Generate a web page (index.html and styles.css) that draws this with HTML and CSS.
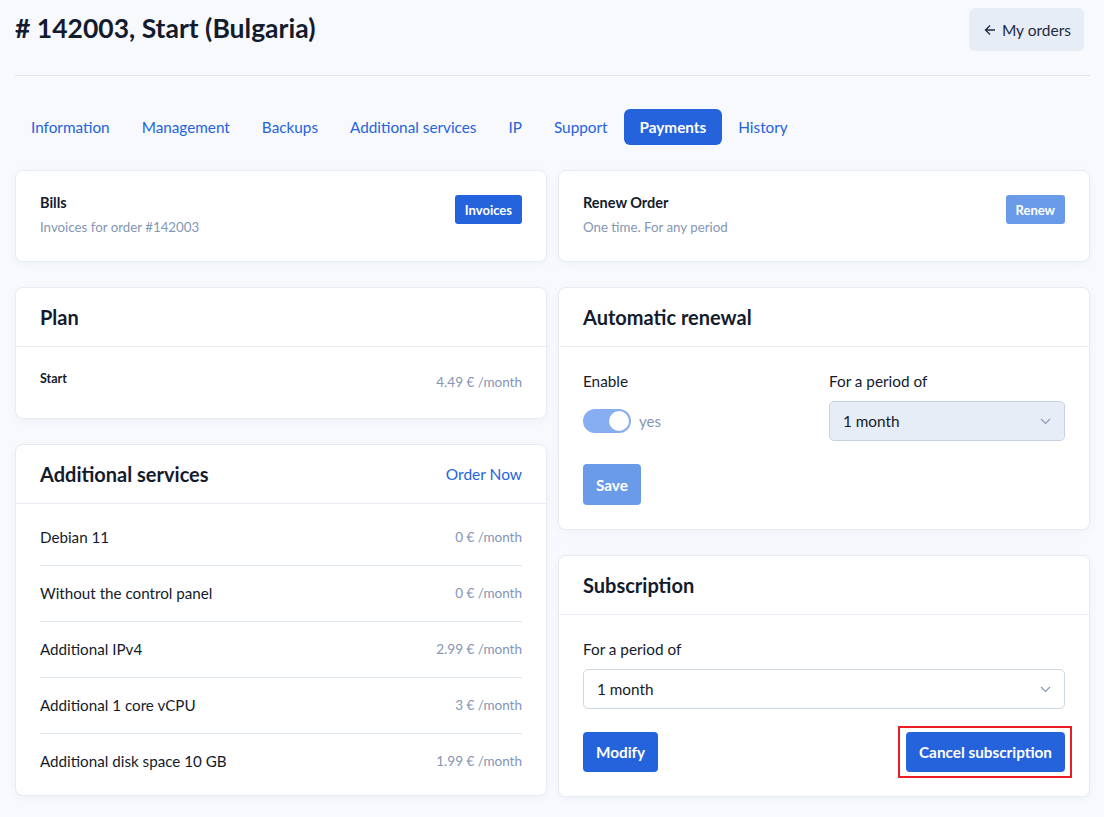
FILE: index.html
```html
<!DOCTYPE html>
<html>
<head>
    <title>Order #142003</title>
    <link rel="stylesheet" href="styles.css">
</head>
<body>
    <div class="page">
        <div class="page-header">
            <h1># 142003, Start (Bulgaria)</h1>
            <a class="back-btn" href="#">
                <svg width="12" height="12" viewBox="0 0 12 12"><path d="M11 6H1.5M6 1.5L1.5 6L6 10.5" fill="none" stroke="currentColor" stroke-width="1.3"/></svg>
                My orders
            </a>
        </div>

        <nav class="tabs">
            <a href="#">Information</a>
            <a href="#">Management</a>
            <a href="#">Backups</a>
            <a href="#">Additional services</a>
            <a href="#">IP</a>
            <a href="#">Support</a>
            <a href="#" class="active">Payments</a>
            <a href="#">History</a>
        </nav>

        <div class="columns">
            <div class="column">
                <div class="card card-inline">
                    <div>
                        <div class="inline-title">Bills</div>
                        <div class="inline-sub">Invoices for order #142003</div>
                    </div>
                    <button class="btn btn-sm">Invoices</button>
                </div>

                <div class="card">
                    <div class="card-header">
                        <h2>Plan</h2>
                    </div>
                    <div class="plan-body">
                        <span class="plan-name">Start</span>
                        <span class="price">4.49 € /month</span>
                    </div>
                </div>

                <div class="card">
                    <div class="card-header">
                        <h2>Additional services</h2>
                        <a href="#" class="header-link">Order Now</a>
                    </div>
                    <div class="service-list">
                        <div class="service-row"><span>Debian 11</span><span class="price">0 € /month</span></div>
                        <div class="service-row"><span>Without the control panel</span><span class="price">0 € /month</span></div>
                        <div class="service-row"><span>Additional IPv4</span><span class="price">2.99 € /month</span></div>
                        <div class="service-row"><span>Additional 1 core vCPU</span><span class="price">3 € /month</span></div>
                        <div class="service-row"><span>Additional disk space 10 GB</span><span class="price">1.99 € /month</span></div>
                    </div>
                </div>
            </div>

            <div class="column">
                <div class="card card-inline">
                    <div>
                        <div class="inline-title">Renew Order</div>
                        <div class="inline-sub">One time. For any period</div>
                    </div>
                    <button class="btn btn-sm btn-light">Renew</button>
                </div>

                <div class="card">
                    <div class="card-header">
                        <h2>Automatic renewal</h2>
                    </div>
                    <div class="card-body">
                        <div class="form-grid">
                            <div>
                                <label class="field-label">Enable</label>
                                <div class="toggle-wrap">
                                    <span class="toggle"><span class="knob"></span></span>
                                    <span class="toggle-text">yes</span>
                                </div>
                            </div>
                            <div>
                                <label class="field-label">For a period of</label>
                                <div class="select select-disabled">
                                    <span>1 month</span>
                                    <svg width="11" height="7" viewBox="0 0 11 7"><path d="M1 1l4.5 4.5L10 1" fill="none" stroke="#8a9ab5" stroke-width="1.2"/></svg>
                                </div>
                            </div>
                        </div>
                        <button class="btn btn-light btn-save">Save</button>
                    </div>
                </div>

                <div class="card">
                    <div class="card-header">
                        <h2>Subscription</h2>
                    </div>
                    <div class="card-body">
                        <label class="field-label">For a period of</label>
                        <div class="select">
                            <span>1 month</span>
                            <svg width="11" height="7" viewBox="0 0 11 7"><path d="M1 1l4.5 4.5L10 1" fill="none" stroke="#8a9ab5" stroke-width="1.2"/></svg>
                        </div>
                        <div class="sub-actions">
                            <button class="btn">Modify</button>
                            <span class="marked"><button class="btn">Cancel subscription</button></span>
                        </div>
                    </div>
                </div>
            </div>
        </div>
    </div>
</body>
</html>
```

FILE: styles.css
```css
body {
    margin: 0;
    background: #f7f9fd;
    font-family: Lato, "Open Sans", sans-serif;
    color: #141b2d;
}

.page {
    padding: 8px 14px 20px 15px;
}

.page-header {
    display: flex;
    justify-content: space-between;
    align-items: flex-start;
    padding-bottom: 24px;
    border-bottom: 1px solid #dfe5ee;
}

h1 {
    margin: 0;
    padding-top: 3px;
    font-size: 26.5px;
    font-weight: 700;
    line-height: 34px;
}

.back-btn {
    display: flex;
    align-items: center;
    gap: 6px;
    height: 43px;
    padding: 0 13px 0 15px;
    margin-right: 6px;
    background: #e6edf7;
    border-radius: 6px;
    color: #1e2a40;
    font-size: 15.5px;
    text-decoration: none;
}

.tabs {
    display: flex;
    margin-top: 33px;
}

.tabs a {
    padding: 0 16px;
    height: 36px;
    line-height: 36px;
    border-radius: 6px;
    color: #2563dc;
    font-size: 15.3px;
    text-decoration: none;
}

.tabs a.active {
    background: #2563dc;
    color: #fff;
    font-weight: 700;
}

.columns {
    display: grid;
    grid-template-columns: 1fr 1fr;
    gap: 11px;
    margin-top: 25px;
}

.column {
    display: flex;
    flex-direction: column;
    gap: 25px;
}

.card {
    background: #fff;
    border: 1px solid #e7ecf4;
    border-radius: 8px;
    box-shadow: 0 2px 8px rgba(30, 50, 90, 0.04);
}

.card-inline {
    display: flex;
    justify-content: space-between;
    align-items: flex-start;
    padding: 22px 24px 24px;
}

.inline-title {
    font-size: 14.5px;
    font-weight: 700;
    line-height: 20px;
}

.inline-sub {
    margin-top: 4px;
    font-size: 13.3px;
    line-height: 20px;
    color: #8496b5;
}

.card-header {
    display: flex;
    justify-content: space-between;
    align-items: center;
    height: 58px;
    padding: 0 24px;
    border-bottom: 1px solid #e7ecf4;
}

h2 {
    margin: 0;
    font-size: 20px;
    font-weight: 700;
}

.header-link {
    color: #2563dc;
    font-size: 15.5px;
    text-decoration: none;
}

.price {
    font-size: 13.5px;
    color: #8496b5;
}

.plan-body {
    display: flex;
    justify-content: space-between;
    align-items: flex-start;
    padding: 24px 24px 26px;
    height: 21px;
}

.plan-name {
    font-size: 12.5px;
    font-weight: 700;
}

.plan-body .price {
    padding-top: 3px;
}

.service-list {
    padding: 6px 24px;
}

.service-row {
    display: flex;
    justify-content: space-between;
    align-items: center;
    padding: 17px 0;
    line-height: 21px;
    font-size: 15.2px;
    border-bottom: 1px solid #dee6f1;
}

.service-row:last-child {
    border-bottom: none;
}

.card-body {
    padding: 24px 24px 24px;
}

.form-grid {
    display: grid;
    grid-template-columns: 1fr 1fr;
    gap: 10px;
}

.field-label {
    display: block;
    margin-bottom: 10px;
    font-size: 15.3px;
    line-height: 20px;
}

.toggle-wrap {
    display: flex;
    align-items: center;
    gap: 8px;
    height: 40px;
}

.toggle {
    display: flex;
    justify-content: flex-end;
    align-items: center;
    width: 48px;
    height: 24px;
    padding: 0 2px;
    box-sizing: border-box;
    background: #86aef0;
    border-radius: 12px;
}

.knob {
    width: 20px;
    height: 20px;
    background: #fff;
    border-radius: 50%;
}

.toggle-text {
    font-size: 15px;
    color: #8496b5;
}

.select {
    display: flex;
    justify-content: space-between;
    align-items: center;
    height: 40px;
    padding: 0 13px;
    border: 1px solid #cfd8e6;
    border-radius: 5px;
    background: #fff;
    font-size: 15.3px;
    box-sizing: border-box;
}

.select-disabled {
    background: #e6edf7;
    border-color: #c6d2e4;
}

.btn {
    padding: 0 13px;
    height: 40px;
    border: none;
    border-radius: 4px;
    background: #2563dc;
    color: #fff;
    font-family: inherit;
    font-size: 15.3px;
    font-weight: 700;
    cursor: pointer;
}

.btn-sm {
    height: 29px;
    padding: 0 10px;
    font-size: 13px;
    border-radius: 3px;
    margin-top: 2px;
}

.btn-light {
    background: #6a9be9;
}

.btn-save {
    margin-top: 23px;
    height: 41px;
}

.sub-actions {
    display: flex;
    justify-content: space-between;
    align-items: center;
    margin-top: 23px;
}

.marked {
    display: block;
    margin: -7px -7px -6px 0;
    padding: 4px 5px 4px 6px;
    border: 2px solid #ec1c24;
}

.marked .btn {
    display: block;
}
```
